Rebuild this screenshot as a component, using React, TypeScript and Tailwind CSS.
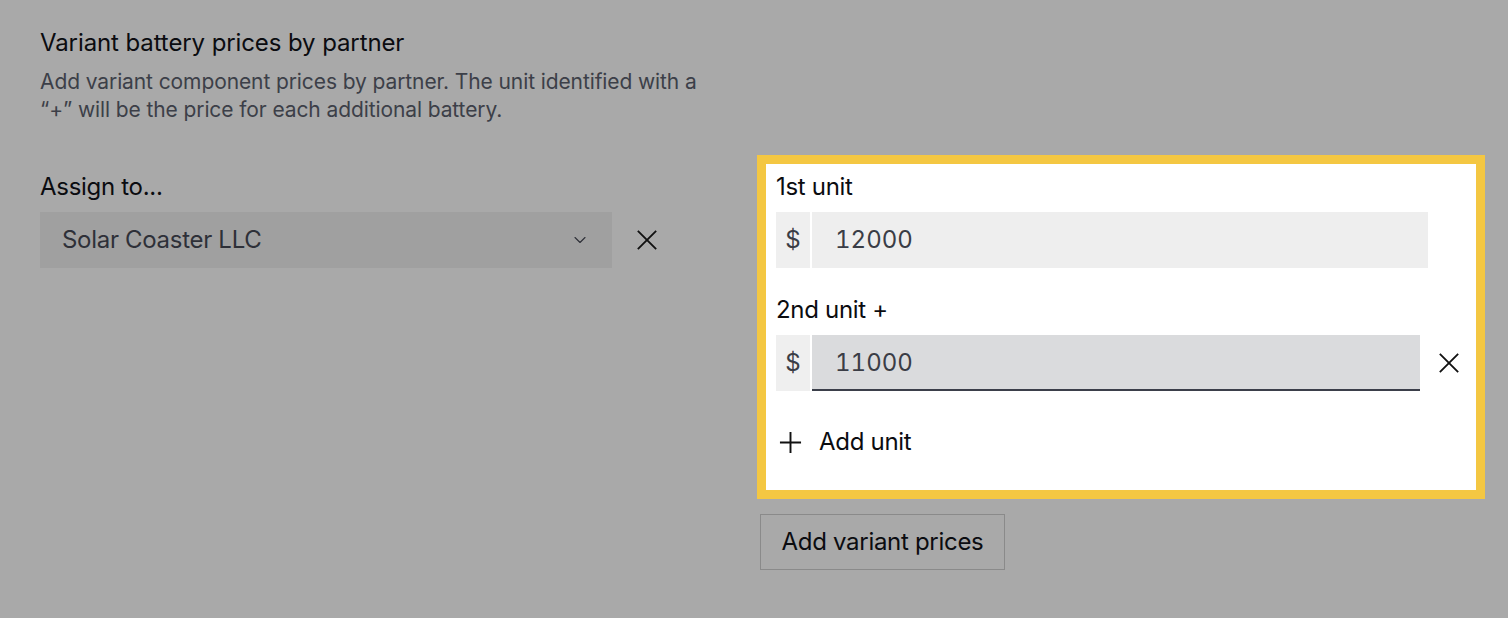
import { ChevronDown } from "lucide-react";

const font = { fontFamily: "Inter, 'Noto Sans', sans-serif" };

function Cross({ className = "" }: { className?: string }) {
    return (
        <svg viewBox="0 0 24 24" className={className} fill="none" stroke="currentColor" strokeWidth={2} strokeLinecap="butt">
            <path d="M2 2 L22 22 M22 2 L2 22" />
        </svg>
    );
}

function PlusIcon({ className = "" }: { className?: string }) {
    return (
        <svg viewBox="0 0 24 24" className={className} fill="none" stroke="currentColor" strokeWidth={2}>
            <path d="M12 1 V23 M1 12 H23" />
        </svg>
    );
}

function PriceRow({ label, value, removable }: { label: string; value: string; removable?: boolean }) {
    return (
        <div className="flex flex-col">
            <div className="h-[28px] text-[24px] leading-[28px] text-[#0b0c10] tracking-[-0.3px]">{label}</div>
            <div className="mt-[11px] flex items-center">
                <div className="flex h-[56px] w-[652px] shrink-0">
                    <div className="flex w-[34px] items-center justify-center bg-[#efefef] text-[24px] text-[#3a3d46]">$</div>
                    <div
                        className={`ml-[2px] flex flex-1 items-center pl-[23px] text-[24px] text-[#3a3d46] tabular-nums ${
                            removable ? "mr-[8px] border-b-2 border-[#3b3f4a] bg-[#dadbdd] pt-[2px]" : "bg-[#eeeeee]"
                        }`}
                    >
                        {value}
                    </div>
                </div>
                {removable && <Cross className="ml-[10px] h-[22px] w-[22px] text-[#111]" />}
            </div>
        </div>
    );
}

export default function App() {
    return (
        <div className="h-[618px] w-[1508px] bg-[#a9a9a9] px-[40px] pt-[28px]" style={font}>
            <h2 className="text-[24px] leading-[30px] font-normal text-[#0b0c10] tracking-[-0.1px]">
                Variant battery prices by partner
            </h2>
            <p className="mt-[10px] w-[660px] text-[21px] leading-[28px] text-[#3c3f48] tracking-[-0.1px]">
                Add variant component prices by partner. The unit identified with a “+” will be the price for each additional battery.
            </p>

            <div className="mt-[31px] flex">
                <div className="flex w-[717px] shrink-0 flex-col pt-[18px]">
                    <div className="h-[28px] text-[24px] leading-[28px] text-[#0b0c10] tracking-[-0.3px]">Assign to...</div>
                    <div className="mt-[11px] flex items-center">
                        <div className="flex h-[56px] w-[572px] items-center justify-between bg-[#a0a0a0] pl-[22px] pr-[22px]">
                            <span className="text-[24px] text-[#2e3038] tracking-[-0.3px]">Solar Coaster LLC</span>
                            <ChevronDown className="h-[20px] w-[20px] text-[#2e3038]" strokeWidth={1.3} />
                        </div>
                        <Cross className="ml-[24px] h-[22px] w-[22px] text-[#111]" />
                    </div>
                </div>

                <div className="flex shrink-0 flex-col">
                    <div className="w-[728px] border-[9px] border-[#f4c742] bg-white pl-[10px] pr-[10px] pt-[9px] pb-[34px]">
                        <PriceRow label="1st unit" value="12000" />
                        <div className="mt-[28px]">
                            <PriceRow label="2nd unit +" value="11000" removable />
                        </div>
                        <div className="mt-[37px] flex h-[28px] items-center">
                            <PlusIcon className="ml-[3px] h-[23px] w-[23px] text-[#111]" />
                            <span className="ml-[17px] text-[24px] text-[#0b0c10] tracking-[-0.3px]">Add unit</span>
                        </div>
                    </div>
                    <button className="ml-[3px] mt-[15px] h-[56px] w-[245px] border border-[#8a8a8a] text-[24px] text-[#0b0c10] tracking-[-0.3px]">
                        Add variant prices
                    </button>
                </div>
            </div>
        </div>
    );
}
